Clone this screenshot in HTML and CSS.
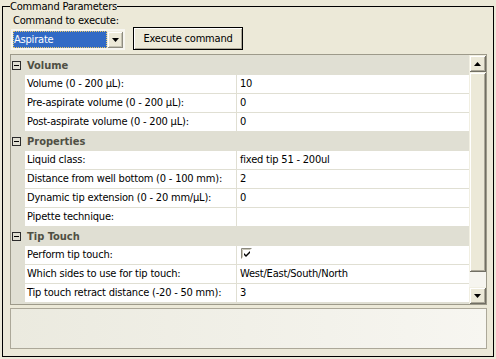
FILE: index.html
```html
<!DOCTYPE html>
<html lang="en">
<head>
  <meta charset="UTF-8" />
  <title>Command Parameters</title>
  <link rel="stylesheet" href="styles.css">
</head>
<body>

  <fieldset class="group">
    <legend>Command Parameters</legend>

    <!-- command select + execute -->
    <div class="cmd-label">Command to execute:</div>
    <div class="cmd-row">
      <div class="combo">
        <span class="combo-value"><span class="focus">Aspirate</span></span>
        <span class="combo-btn">
          <svg width="7" height="4" viewBox="0 0 7 4"><path d="M0 0h7L3.5 4z" fill="#000"/></svg>
        </span>
      </div>
      <button class="exec-btn">Execute command</button>
    </div>

    <!-- property grid -->
    <div class="grid">
      <div class="grid-rows">
        <div class="cat">
          <span class="gutter"><svg class="minus" width="9" height="9" viewBox="0 0 9 9"><rect x="0.5" y="0.5" width="8" height="8" fill="none" stroke="#2b2b2b"/><path d="M2 4.5h5" stroke="#000"/></svg></span>
          <span class="cat-name">Volume</span>
        </div>
        <div class="prop"><span class="gutter"></span><span class="name">Volume (0 - 200 µL):</span><span class="val">10</span></div>
        <div class="prop"><span class="gutter"></span><span class="name">Pre-aspirate volume (0 - 200 µL):</span><span class="val">0</span></div>
        <div class="prop"><span class="gutter"></span><span class="name">Post-aspirate volume (0 - 200 µL):</span><span class="val">0</span></div>

        <div class="cat">
          <span class="gutter"><svg class="minus" width="9" height="9" viewBox="0 0 9 9"><rect x="0.5" y="0.5" width="8" height="8" fill="none" stroke="#2b2b2b"/><path d="M2 4.5h5" stroke="#000"/></svg></span>
          <span class="cat-name">Properties</span>
        </div>
        <div class="prop"><span class="gutter"></span><span class="name">Liquid class:</span><span class="val">fixed tip 51 - 200ul</span></div>
        <div class="prop"><span class="gutter"></span><span class="name">Distance from well bottom (0 - 100 mm):</span><span class="val">2</span></div>
        <div class="prop"><span class="gutter"></span><span class="name">Dynamic tip extension (0 - 20 mm/µL):</span><span class="val">0</span></div>
        <div class="prop"><span class="gutter"></span><span class="name">Pipette technique:</span><span class="val"></span></div>

        <div class="cat">
          <span class="gutter"><svg class="minus" width="9" height="9" viewBox="0 0 9 9"><rect x="0.5" y="0.5" width="8" height="8" fill="none" stroke="#2b2b2b"/><path d="M2 4.5h5" stroke="#000"/></svg></span>
          <span class="cat-name">Tip Touch</span>
        </div>
        <div class="prop"><span class="gutter"></span><span class="name">Perform tip touch:</span>
          <span class="val val-check">
            <svg width="11" height="11" viewBox="0 0 11 11">
              <rect x="0" y="0" width="11" height="11" fill="#fff"/>
              <path d="M0.5 10.5V0.5h10" fill="none" stroke="#8a887c"/>
              <path d="M1.5 9.5V1.5h8" fill="none" stroke="#c9c6b8"/>
              <path d="M3 5l2 2 4-4v2l-4 4-2-2z" fill="#000"/>
            </svg>
          </span>
        </div>
        <div class="prop"><span class="gutter"></span><span class="name">Which sides to use for tip touch:</span><span class="val">West/East/South/North</span></div>
        <div class="prop"><span class="gutter"></span><span class="name">Tip touch retract distance (-20 - 50 mm):</span><span class="val">3</span></div>
      </div>

      <div class="vscroll">
        <div class="sb-btn"><svg width="7" height="4" viewBox="0 0 7 4"><path d="M3.5 0L7 4H0z" fill="#000"/></svg></div>
        <div class="sb-thumb"></div>
        <div class="sb-track"></div>
        <div class="sb-btn"><svg width="7" height="4" viewBox="0 0 7 4"><path d="M0 0h7L3.5 4z" fill="#000"/></svg></div>
      </div>
    </div>

    <!-- description pane -->
    <div class="desc"></div>
  </fieldset>

</body>
</html>
```

FILE: styles.css
```css
body {
  margin: 0;
  background: #ece9d8;
  font-family: "DejaVu Sans Condensed", "Liberation Sans", sans-serif;
  font-size: 11px;
  letter-spacing: -0.2px;
  color: #000;
}

.group {
  margin: 0 2px;
  border: 1px solid #000;
  padding: 1px 6px 7px 7px;
}

.group legend {
  padding: 0;
  line-height: 13px;
}

.cmd-label {
  line-height: 13px;
  padding-left: 3px;
}

.cmd-row {
  display: flex;
  align-items: flex-end;
  height: 23px;
}

/* combo box */
.combo {
  display: flex;
  width: 114px;
  height: 21px;
  box-sizing: border-box;
  margin-left: 1px;
  border: 2px solid #f7f6f1;
  background: #fff;
}

.combo-value {
  flex: 1;
  background: #316ac5;
  color: #fff;
  display: flex;
}

.combo-value .focus {
  flex: 1;
  border: 1px dotted #e8c86a;
  line-height: 15px;
}

.combo-btn {
  width: 16px;
  background: #ece9d8;
  box-shadow: inset 1px 1px #f1efe2, inset -1px -1px #8e8c80, inset 2px 2px #fff, inset -2px -2px #c4c1b2;
  display: flex;
  align-items: center;
  justify-content: center;
}

.exec-btn {
  margin-left: 8px;
  width: 110px;
  height: 23px;
  border: 1px solid #000;
  background: #ece9d8;
  box-shadow: inset 1px 1px #fff, inset -1px -1px #aca899;
  font: inherit;
  letter-spacing: inherit;
  color: #000;
  padding: 0;
}

/* property grid */
.grid {
  margin-top: 4px;
  border: 1px solid #9d9a8a;
  display: flex;
  background: #e0dfd3;
}

.grid-rows {
  flex: 1;
  padding: 1px 0;
}

.cat, .prop {
  display: grid;
  height: 19px;
}

.cat {
  grid-template-columns: 14px 1fr;
  align-items: center;
}

.cat .gutter {
  display: flex;
  padding-left: 1px;
}

.cat-name {
  font-weight: bold;
  color: #4f4f44;
  padding-left: 2px;
  letter-spacing: 0;
}

.prop {
  grid-template-columns: 14px 212px 1fr;
}

.prop .name, .prop .val {
  background: #fff;
  border-bottom: 1px solid #e0dfd3;
  line-height: 18px;
  white-space: nowrap;
  overflow: hidden;
}

.prop .name {
  padding-left: 2px;
  border-right: 1px solid #e0dfd3;
}

.prop .val {
  padding-left: 3px;
}

.val-check {
  display: flex;
  align-items: flex-start;
  padding-top: 2px;
  box-sizing: border-box;
}

.val-check svg {
  margin-left: 1px;
}

/* scrollbar */
.vscroll {
  width: 17px;
  display: flex;
  flex-direction: column;
  background: #f6f5ef;
}

.sb-btn {
  height: 17px;
  background: #ece9d8;
  box-shadow: inset 1px 1px #f1efe2, inset -1px -1px #716f64, inset 2px 2px #fff, inset -2px -2px #aca899;
  display: flex;
  align-items: center;
  justify-content: center;
}

.sb-thumb {
  height: 200px;
  background: #ece9d8;
  box-shadow: inset 1px 1px #f1efe2, inset -1px -1px #716f64, inset 2px 2px #fff, inset -2px -2px #aca899;
}

.sb-track {
  flex: 1;
}

.desc {
  margin-top: 3px;
  height: 41px;
  box-sizing: border-box;
  border: 1px solid #aca899;
  background: linear-gradient(to right, #ebeadf, #f7f6f1);
}
```
